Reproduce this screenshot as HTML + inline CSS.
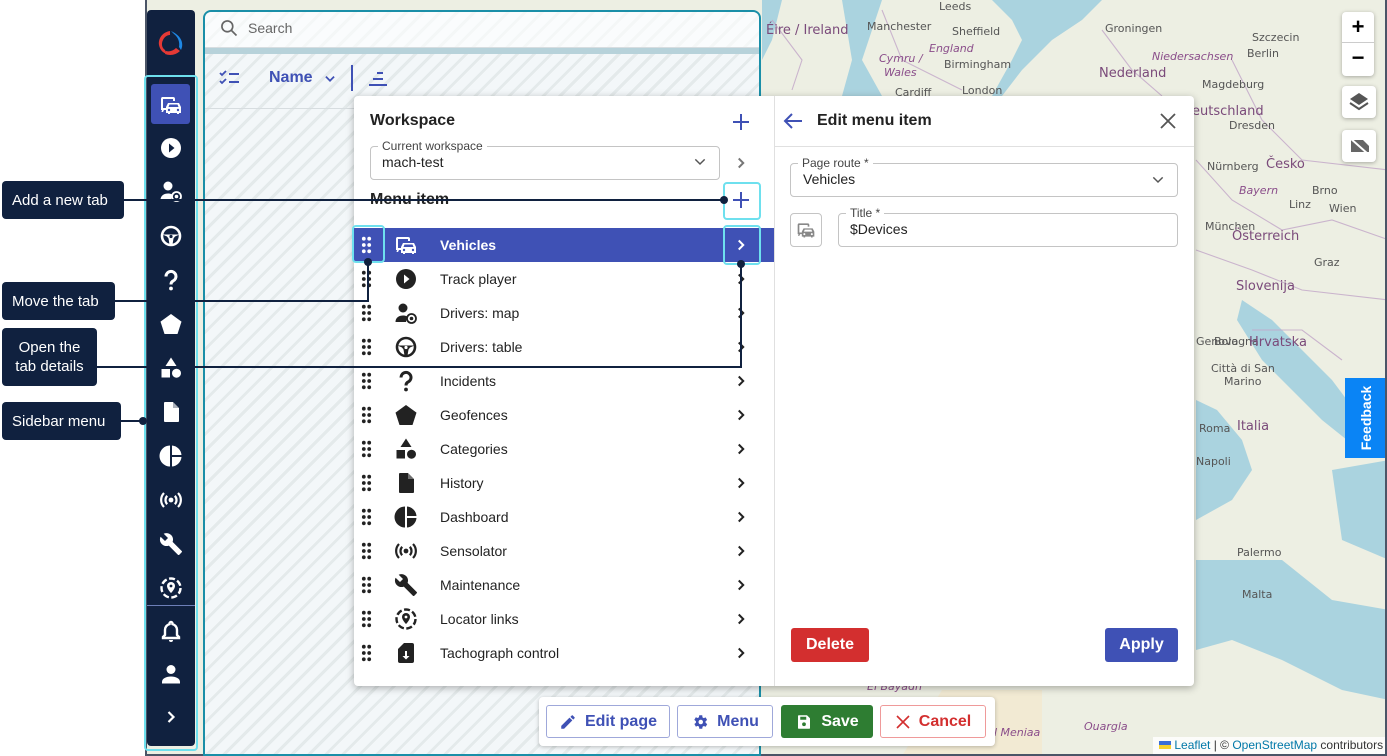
<!DOCTYPE html>
<html><head><meta charset="utf-8">
<style>
*{box-sizing:border-box;margin:0;padding:0}
body{width:1387px;height:756px;overflow:hidden;background:#fff;font-family:"Liberation Sans",sans-serif;position:relative}
.abs{position:absolute}
.frame{left:145px;top:0;width:1242px;height:756px;border:2px solid #4b5567;border-top:none;overflow:hidden;background:#a9d2de}
.map{left:0;top:0}
.sidebar{left:147px;top:10px;width:48px;height:736px;background:#10213f;border-radius:4px}
.panel{left:203px;top:10px;width:558px;height:746px;border:2px solid #1a8fa8;border-radius:8px 8px 0 0;background:repeating-linear-gradient(135deg,#f3f7f9 0 9px,#e4eaeb 9px 12px)}
.callout{background:#10213f;color:#fff;font-size:15px;border-radius:4px;left:2px;padding:0 10px;display:flex;align-items:center;white-space:nowrap}
.line{background:#10213f}
.dot{width:8px;height:8px;border-radius:50%;background:#10213f}
.cy{border:2px solid #6ee0ee;border-radius:4px}
.popup{left:354px;top:96px;width:840px;height:590px;background:#fff;border-radius:4px;box-shadow:0 2px 8px rgba(0,0,0,.3)}
.row{position:absolute;left:0;width:420px;height:34px;font-size:14px;color:#222}
.row .t{position:absolute;left:86px;top:9px}
.row svg{position:absolute}
.btn{position:absolute;top:705px;height:33px;border-radius:3px;font-size:16px;font-weight:bold;display:flex;align-items:center;justify-content:center;gap:8px}
.ctl{background:#fff;border-radius:4px;box-shadow:0 1px 4px rgba(0,0,0,.3)}
.mt{font-family:"DejaVu Sans",sans-serif;font-size:11px;fill:#555}
.mp{font-family:"DejaVu Sans",sans-serif;font-size:11px;fill:#8a4d8a;font-style:italic}
.mc{font-family:"DejaVu Sans",sans-serif;font-size:13px;fill:#7a4a7a}
</style></head><body>
<svg width="0" height="0" style="position:absolute">
<defs>
<symbol id="car" viewBox="0 0 24 24"><path d="M3 4h11a2 2 0 0 1 2 2v2h-2V6H4v9h3v2H5l-1 2H2.5l.5-2H2V6a2 2 0 0 1 1-2z M9 10h11l2 4v6h-2v1h-2v-1h-7v1h-2v-1H7v-6z" fill="currentColor"/><path d="M10.5 11.5h8l1 2.5h-10z" fill="var(--bg)"/><circle cx="10" cy="17" r="1.2" fill="var(--bg)"/><circle cx="19" cy="17" r="1.2" fill="var(--bg)"/></symbol>
<symbol id="play" viewBox="0 0 24 24"><circle cx="12" cy="12" r="10" fill="currentColor"/><path d="M10 7.5l5.5 4.5-5.5 4.5z" fill="var(--bg)"/></symbol>
<symbol id="drv" viewBox="0 0 24 24"><circle cx="9" cy="7" r="4.5" fill="currentColor"/><path d="M1.5 21c0-4.5 3.5-6.5 7.5-6.5 1.5 0 3 .3 4 1l-1 5.5z" fill="currentColor"/><circle cx="17.5" cy="17.5" r="4.5" fill="none" stroke="currentColor" stroke-width="1.8"/><circle cx="17.5" cy="17.5" r="1.8" fill="currentColor"/></symbol>
<symbol id="wheel" viewBox="0 0 24 24"><circle cx="12" cy="12" r="9" fill="none" stroke="currentColor" stroke-width="2.6"/><path d="M3.5 10.5h17l-4.5 2-1.5 2-1 6h-3l-1-6-1.5-2z" fill="currentColor"/><circle cx="12" cy="12.5" r="1.6" fill="var(--bg)"/></symbol>
<symbol id="pent" viewBox="0 0 24 24"><path d="M12 2l10.5 7.6-4 12.4H5.5l-4-12.4z" fill="currentColor"/></symbol>
<symbol id="cat" viewBox="0 0 24 24"><path d="M12 1.5l5.5 8.5H6.5z M2.5 13h8.5v8.5H2.5z" fill="currentColor"/><circle cx="17.5" cy="17.2" r="4.5" fill="currentColor"/></symbol>
<symbol id="file" viewBox="0 0 24 24"><path d="M6 2h8l6 6v13a1 1 0 0 1-1 1H6a1 1 0 0 1-1-1V3a1 1 0 0 1 1-1z" fill="currentColor"/><path d="M14 2v6h6z" fill="var(--bg)" opacity=".35"/></symbol>
<symbol id="pie" viewBox="0 0 24 24"><path d="M11 1.5v21a10.5 10.5 0 0 1 0-21z M13 1.5a10.5 10.5 0 0 1 9.5 9.5H13z M13 13h9.5a10.5 10.5 0 0 1-9.5 9.5z" fill="currentColor"/></symbol>
<symbol id="sens" viewBox="0 0 24 24"><circle cx="12" cy="12" r="2.4" fill="currentColor"/><path d="M8.2 7.8a6 6 0 0 0 0 8.4M15.8 7.8a6 6 0 0 1 0 8.4M5 5a10 10 0 0 0 0 14M19 5a10 10 0 0 1 0 14" fill="none" stroke="currentColor" stroke-width="2.2"/></symbol>
<symbol id="wrench" viewBox="0 0 24 24"><path d="M22.7 19l-9.1-9.1c.9-2.3.4-5-1.5-6.9-2-2-5-2.4-7.4-1.3L9 6 6 9 1.6 4.7C.4 7.1.9 10.1 2.9 12.1c1.9 1.9 4.6 2.4 6.9 1.5l9.1 9.1c.4.4 1 .4 1.4 0l2.3-2.3c.5-.4.5-1.1.1-1.4z" fill="currentColor"/></symbol>
<symbol id="loc" viewBox="0 0 24 24"><circle cx="12" cy="12" r="9.5" fill="none" stroke="currentColor" stroke-width="2.4" stroke-dasharray="6 2.5"/><path d="M12 6a4 4 0 0 1 4 4c0 3-4 7-4 7s-4-4-4-7a4 4 0 0 1 4-4z" fill="currentColor"/><circle cx="12" cy="10" r="1.4" fill="var(--bg)"/></symbol>
<symbol id="tacho" viewBox="0 0 24 24"><path d="M10 2h8a2 2 0 0 1 2 2v16a2 2 0 0 1-2 2H6a2 2 0 0 1-2-2V8z" fill="currentColor"/><path d="M11 10h2v5h2.5L12 18.5 8.5 15H11z" fill="var(--bg)"/></symbol>
<symbol id="q" viewBox="0 0 24 24"><path d="M7 8.5a5 5 0 1 1 7 4.5c-1.4.7-2 1.5-2 3.5" fill="none" stroke="currentColor" stroke-width="3"/><circle cx="12" cy="20.5" r="1.9" fill="currentColor"/></symbol>
<symbol id="dots" viewBox="0 0 12 20"><g fill="currentColor"><circle cx="3" cy="3" r="2.1"/><circle cx="9" cy="3" r="2.1"/><circle cx="3" cy="10" r="2.1"/><circle cx="9" cy="10" r="2.1"/><circle cx="3" cy="17" r="2.1"/><circle cx="9" cy="17" r="2.1"/></g></symbol>
<symbol id="chev" viewBox="0 0 24 24"><path d="M9 6l6 6-6 6" fill="none" stroke="currentColor" stroke-width="2.6"/></symbol>
<symbol id="bell" viewBox="0 0 24 24"><path d="M12 3a1.5 1.5 0 0 1 1.5 1.5v.6A6 6 0 0 1 18 11v5l2 2v1H4v-1l2-2v-5a6 6 0 0 1 4.5-5.9v-.6A1.5 1.5 0 0 1 12 3z" fill="none" stroke="currentColor" stroke-width="2.4"/><path d="M10 21h4a2 2 0 0 1-4 0z" fill="currentColor"/></symbol>
<symbol id="person" viewBox="0 0 24 24"><circle cx="12" cy="7.5" r="4.5" fill="currentColor"/><path d="M3 20c0-3.5 4-5.5 9-5.5s9 2 9 5.5v1.5H3z" fill="currentColor"/></symbol>
</defs></svg>

<div class="abs frame">
<svg class="abs map" width="1242" height="756" viewBox="145 0 1242 756">
<rect x="145" width="1242" height="756" fill="#edefe3"/>
<path d="M760 0 L780 0 L770 40 L760 60 Z" fill="#aad3df"/>
<path d="M840 0 L880 0 L870 30 L860 60 L880 96 L840 96 L850 60 L845 30 Z" fill="#aad3df"/>
<path d="M990 0 L1100 0 L1080 20 L1050 40 L1020 70 L1000 96 L990 96 L1010 60 L1020 40 L1010 20 Z" fill="#aad3df"/>
<path d="M1240 300 L1270 320 L1300 350 L1330 380 L1345 400 L1345 440 L1320 420 L1290 390 L1260 360 L1235 320 Z" fill="#aad3df"/>
<path d="M1194 400 L1215 410 L1240 440 L1250 470 L1230 500 L1194 520 Z" fill="#aad3df"/>
<path d="M1194 560 L1280 560 L1330 600 L1387 610 L1387 700 L1340 690 L1280 660 L1230 640 L1194 650 Z" fill="#aad3df"/>
<path d="M1330 470 L1387 460 L1387 560 L1340 540 Z" fill="#aad3df"/>
<path d="M940 690 L1040 690 L1040 756 L900 756 Z" fill="#f2ead3"/>
<g fill="none" stroke="#c2a6c8" stroke-width="1.1" opacity=".8">
<path d="M1194 160 L1230 200 L1280 230 L1330 220 L1387 240"/>
<path d="M1194 250 L1250 270 L1300 290 L1387 300"/>
<path d="M1230 60 L1260 120 L1300 160 L1387 170"/>
<path d="M1250 330 L1300 330 L1340 360"/>
<path d="M770 20 L800 60 L790 90"/>
<path d="M880 10 L900 60 L960 90"/>
<path d="M1100 30 L1130 70 L1160 96"/>
</g>
<g class="mt">
<text x="937" y="10">Leeds</text><text x="865" y="30">Manchester</text><text x="950" y="35">Sheffield</text><text x="942" y="68">Birmingham</text><text x="893" y="96">Cardiff</text><text x="960" y="94">London</text>
<text x="1103" y="32">Groningen</text><text x="1250" y="41">Szczecin</text><text x="1245" y="57">Berlin</text><text x="1200" y="88">Magdeburg</text><text x="1227" y="129">Dresden</text><text x="1205" y="170">Nürnberg</text><text x="1203" y="230">München</text><text x="1310" y="194">Brno</text><text x="1327" y="212">Wien</text><text x="1287" y="208">Linz</text><text x="1312" y="266">Graz</text>
<text x="1212" y="345">Bologna</text><text x="1209" y="372">Città di San</text><text x="1222" y="385">Marino</text><text x="1197" y="432">Roma</text><text x="1194" y="465">Napoli</text><text x="1235" y="556">Palermo</text><text x="1240" y="598">Malta</text><text x="1194" y="345">Genova</text>
</g>
<g class="mc"><text x="764" y="34">Éire / Ireland</text><text x="1097" y="77">Nederland</text><text x="1180" y="115">Deutschland</text><text x="1230" y="240">Österreich</text><text x="1234" y="290">Slovenija</text><text x="1247" y="346">Hrvatska</text><text x="1235" y="430">Italia</text><text x="1264" y="168">Česko</text></g>
<g class="mp"><text x="927" y="52">England</text><text x="877" y="62">Cymru /</text><text x="882" y="76">Wales</text><text x="1150" y="60">Niedersachsen</text><text x="1237" y="194">Bayern</text><text x="865" y="690">El Bayadh</text><text x="1082" y="730">Ouargla</text><text x="985" y="736">El Meniaa</text></g>
</svg>
<div class="abs ctl" style="left:1195px;top:12px;width:32px;height:64px;font-size:22px;font-weight:bold;text-align:center;line-height:30px"><div style="border-bottom:1px solid #ccc;height:31px">+</div><div>−</div></div>
<div class="abs ctl" style="left:1195px;top:86px;width:34px;height:32px"><svg width="34" height="32" viewBox="0 0 34 32"><path d="M17 7l9 6-9 6-9-6z" fill="#555"/><path d="M8 17l9 6 9-6" fill="none" stroke="#555" stroke-width="2"/></svg></div>
<div class="abs ctl" style="left:1195px;top:130px;width:34px;height:32px"><svg width="34" height="32" viewBox="0 0 34 32"><path d="M9 10h12l6 6v6H9z" fill="#666"/><path d="M8 8l18 16" stroke="#fff" stroke-width="2"/></svg></div>
<div class="abs" style="left:1198px;top:378px;width:42px;height:80px;background:#0a84f5;color:#fff;font-size:14px;font-weight:bold"><div style="position:absolute;left:21px;top:40px;transform:translate(-50%,-50%) rotate(-90deg);white-space:nowrap">Feedback</div></div>
<div class="abs" style="left:1006px;top:737px;width:236px;height:17px;background:rgba(255,255,255,.8);font-size:12px;color:#333;padding:1px 0 0 6px"><span style="display:inline-block;width:12px;height:8px;background:linear-gradient(#3a6fd8 50%,#f7d22d 50%)"></span> <span style="color:#0078a8">Leaflet</span> | © <span style="color:#0078a8">OpenStreetMap</span> contributors</div>
</div>

<div class="abs sidebar" style="color:#fff;--bg:#10213f">
<svg class="abs" style="left:8px;top:18px" width="30" height="30" viewBox="0 0 30 30"><path d="M15 3 C8 4 3 10 4 17 C5 22 8 25 12 26 L10 22 C7 20 6 16 8 12 C10 8 13 7 15 7z" fill="#e53935"/><path d="M16 3 L19 6 C23 9 25 14 24 19 L26 22 C29 16 27 8 16 3z" fill="#1e88e5"/><path d="M10 26 C15 28 21 27 25 23 L21 20 C18 23 14 24 11 23z" fill="#e53935"/></svg>
<div class="abs" style="left:4px;top:74px;width:39px;height:40px;background:#3f51b5;border-radius:3px"></div>
<svg class="abs" style="left:11px;top:83px;--bg:#3f51b5" width="26" height="24"><use href="#car"/></svg>
<svg class="abs" style="left:12px;top:126px" width="24" height="24"><use href="#play"/></svg>
<svg class="abs" style="left:12px;top:169px" width="24" height="24"><use href="#drv"/></svg>
<svg class="abs" style="left:12px;top:214px" width="24" height="24"><use href="#wheel"/></svg>
<svg class="abs" style="left:12px;top:258px" width="24" height="24"><use href="#q"/></svg>
<svg class="abs" style="left:12px;top:302px" width="24" height="24"><use href="#pent"/></svg>
<svg class="abs" style="left:12px;top:346px" width="24" height="24"><use href="#cat"/></svg>
<svg class="abs" style="left:12px;top:390px" width="24" height="24"><use href="#file"/></svg>
<svg class="abs" style="left:12px;top:434px" width="24" height="24"><use href="#pie"/></svg>
<svg class="abs" style="left:12px;top:478px" width="24" height="24"><use href="#sens"/></svg>
<svg class="abs" style="left:12px;top:522px" width="24" height="24"><use href="#wrench"/></svg>
<svg class="abs" style="left:12px;top:566px" width="24" height="24"><use href="#loc"/></svg>
<div class="abs" style="left:0;top:595px;width:48px;height:1px;background:#6d7fb8"></div>
<svg class="abs" style="left:12px;top:609px" width="24" height="24"><use href="#bell"/></svg>
<svg class="abs" style="left:12px;top:652px" width="24" height="24"><use href="#person"/></svg>
<svg class="abs" style="left:14px;top:697px" width="20" height="20"><use href="#chev"/></svg>
</div>

<div class="abs panel">
<div class="abs" style="left:0;top:0;width:554px;height:36px;background:rgba(255,255,255,.6);border-bottom:1px solid #d7dde0;border-radius:6px 6px 0 0"></div>
<svg class="abs" style="left:14px;top:6px" width="20" height="20" viewBox="0 0 24 24"><circle cx="10" cy="10" r="6.5" fill="none" stroke="#666" stroke-width="2"/><path d="M15 15l6 6" stroke="#666" stroke-width="2"/></svg>
<div class="abs" style="left:43px;top:8px;font-size:14px;color:#666">Search</div>
<div class="abs" style="left:0;top:36px;width:554px;height:6px;background:#b7d2da"></div>
<svg class="abs" style="left:14px;top:56px" width="22" height="20" viewBox="0 0 22 20"><path d="M1 5l2 2 4-4M1 13l2 2 4-4" fill="none" stroke="#3f51b5" stroke-width="1.8"/><path d="M10 6h10M10 14h10" stroke="#3f51b5" stroke-width="2"/></svg>
<div class="abs" style="left:64px;top:57px;font-size:16px;font-weight:bold;color:#3f51b5">Name</div>
<svg class="abs" style="left:118px;top:60px" width="14" height="14" viewBox="0 0 24 24"><path d="M5 8l7 7 7-7" fill="none" stroke="#3f51b5" stroke-width="3"/></svg>
<div class="abs" style="left:146px;top:53px;width:2px;height:26px;background:#3f51b5"></div>
<svg class="abs" style="left:162px;top:58px" width="22" height="18" viewBox="0 0 22 18"><path d="M10 3h6M6 9h10M2 15h18" stroke="#3f51b5" stroke-width="2"/></svg>
<div class="abs" style="left:0;top:96px;width:554px;height:1px;background:#d7dde0"></div>
</div>

<div class="abs popup">
<div class="abs" style="left:16px;top:16px;font-size:16px;font-weight:bold;color:#222">Workspace</div>
<svg class="abs" style="left:377px;top:16px" width="20" height="20" viewBox="0 0 20 20"><path d="M10 2v16M2 10h16" stroke="#3f51b5" stroke-width="2"/></svg>
<div class="abs" style="left:16px;top:50px;width:350px;height:34px;border:1px solid #c4c4c4;border-radius:4px"></div>
<div class="abs" style="left:24px;top:43px;font-size:12px;color:#444;background:#fff;padding:0 4px">Current workspace</div>
<div class="abs" style="left:28px;top:58px;font-size:14px;color:#222">mach-test</div>
<svg class="abs" style="left:338px;top:58px" width="16" height="16" viewBox="0 0 24 24"><path d="M5 8l7 7 7-7" fill="none" stroke="#555" stroke-width="2.2"/></svg>
<svg class="abs" style="left:378px;top:58px;color:#777" width="18" height="18"><use href="#chev"/></svg>
<div class="abs" style="left:16px;top:95px;font-size:16px;font-weight:bold;color:#222">Menu item</div>
<svg class="abs" style="left:377px;top:94px" width="20" height="20" viewBox="0 0 20 20"><path d="M10 2v16M2 10h16" stroke="#3f51b5" stroke-width="2"/></svg>
<div class="abs" style="left:420px;top:0;width:1px;height:590px;background:#e0e0e0"></div>

<div class="row" style="top:132px;background:#3f51b5;color:#fff;--bg:#3f51b5;font-weight:bold"><svg style="left:7px;top:8px;color:#fff" width="11" height="18"><use href="#dots"/></svg><svg style="left:39px;top:5px;color:#fff" width="26" height="24"><use href="#car"/></svg><span class="t">Vehicles</span><svg style="left:378px;top:8px;color:#fff" width="18" height="18"><use href="#chev"/></svg></div>
<div class="row" style="top:166px;--bg:#fff;color:#222"><svg style="left:7px;top:8px" width="11" height="18"><use href="#dots"/></svg><svg style="left:40px;top:5px" width="24" height="24"><use href="#play"/></svg><span class="t">Track player</span><svg style="left:378px;top:8px" width="18" height="18"><use href="#chev"/></svg></div>
<div class="row" style="top:200px;--bg:#fff;color:#222"><svg style="left:7px;top:8px" width="11" height="18"><use href="#dots"/></svg><svg style="left:40px;top:5px" width="24" height="24"><use href="#drv"/></svg><span class="t">Drivers: map</span><svg style="left:378px;top:8px" width="18" height="18"><use href="#chev"/></svg></div>
<div class="row" style="top:234px;--bg:#fff;color:#222"><svg style="left:7px;top:8px" width="11" height="18"><use href="#dots"/></svg><svg style="left:40px;top:5px" width="24" height="24"><use href="#wheel"/></svg><span class="t">Drivers: table</span><svg style="left:378px;top:8px" width="18" height="18"><use href="#chev"/></svg></div>
<div class="row" style="top:268px;--bg:#fff;color:#222"><svg style="left:7px;top:8px" width="11" height="18"><use href="#dots"/></svg><svg style="left:40px;top:5px" width="24" height="24"><use href="#q"/></svg><span class="t">Incidents</span><svg style="left:378px;top:8px" width="18" height="18"><use href="#chev"/></svg></div>
<div class="row" style="top:302px;--bg:#fff;color:#222"><svg style="left:7px;top:8px" width="11" height="18"><use href="#dots"/></svg><svg style="left:40px;top:5px" width="24" height="24"><use href="#pent"/></svg><span class="t">Geofences</span><svg style="left:378px;top:8px" width="18" height="18"><use href="#chev"/></svg></div>
<div class="row" style="top:336px;--bg:#fff;color:#222"><svg style="left:7px;top:8px" width="11" height="18"><use href="#dots"/></svg><svg style="left:40px;top:5px" width="24" height="24"><use href="#cat"/></svg><span class="t">Categories</span><svg style="left:378px;top:8px" width="18" height="18"><use href="#chev"/></svg></div>
<div class="row" style="top:370px;--bg:#fff;color:#222"><svg style="left:7px;top:8px" width="11" height="18"><use href="#dots"/></svg><svg style="left:40px;top:5px" width="24" height="24"><use href="#file"/></svg><span class="t">History</span><svg style="left:378px;top:8px" width="18" height="18"><use href="#chev"/></svg></div>
<div class="row" style="top:404px;--bg:#fff;color:#222"><svg style="left:7px;top:8px" width="11" height="18"><use href="#dots"/></svg><svg style="left:40px;top:5px" width="24" height="24"><use href="#pie"/></svg><span class="t">Dashboard</span><svg style="left:378px;top:8px" width="18" height="18"><use href="#chev"/></svg></div>
<div class="row" style="top:438px;--bg:#fff;color:#222"><svg style="left:7px;top:8px" width="11" height="18"><use href="#dots"/></svg><svg style="left:40px;top:5px" width="24" height="24"><use href="#sens"/></svg><span class="t">Sensolator</span><svg style="left:378px;top:8px" width="18" height="18"><use href="#chev"/></svg></div>
<div class="row" style="top:472px;--bg:#fff;color:#222"><svg style="left:7px;top:8px" width="11" height="18"><use href="#dots"/></svg><svg style="left:40px;top:5px" width="24" height="24"><use href="#wrench"/></svg><span class="t">Maintenance</span><svg style="left:378px;top:8px" width="18" height="18"><use href="#chev"/></svg></div>
<div class="row" style="top:506px;--bg:#fff;color:#222"><svg style="left:7px;top:8px" width="11" height="18"><use href="#dots"/></svg><svg style="left:40px;top:5px" width="24" height="24"><use href="#loc"/></svg><span class="t">Locator links</span><svg style="left:378px;top:8px" width="18" height="18"><use href="#chev"/></svg></div>
<div class="row" style="top:540px;--bg:#fff;color:#222"><svg style="left:7px;top:8px" width="11" height="18"><use href="#dots"/></svg><svg style="left:40px;top:5px" width="24" height="24"><use href="#tacho"/></svg><span class="t">Tachograph control</span><svg style="left:378px;top:8px" width="18" height="18"><use href="#chev"/></svg></div>

<svg class="abs" style="left:428px;top:15px" width="22" height="20" viewBox="0 0 22 20"><path d="M20 10H3M10 3l-7 7 7 7" fill="none" stroke="#3f51b5" stroke-width="2"/></svg>
<div class="abs" style="left:463px;top:16px;font-size:16px;font-weight:bold;color:#222">Edit menu item</div>
<svg class="abs" style="left:805px;top:16px" width="18" height="18" viewBox="0 0 18 18"><path d="M2 2l14 14M16 2L2 16" stroke="#555" stroke-width="1.8"/></svg>
<div class="abs" style="left:421px;top:50px;width:419px;height:1px;background:#e0e0e0"></div>
<div class="abs" style="left:436px;top:67px;width:388px;height:34px;border:1px solid #c4c4c4;border-radius:4px"></div>
<div class="abs" style="left:444px;top:60px;font-size:12px;color:#444;background:#fff;padding:0 4px">Page route *</div>
<div class="abs" style="left:449px;top:75px;font-size:14px;color:#222">Vehicles</div>
<svg class="abs" style="left:796px;top:76px" width="16" height="16" viewBox="0 0 24 24"><path d="M5 8l7 7 7-7" fill="none" stroke="#555" stroke-width="2.2"/></svg>
<div class="abs" style="left:436px;top:117px;width:32px;height:34px;border:1px solid #c4c4c4;border-radius:4px"></div>
<svg class="abs" style="left:441px;top:124px;color:#888;--bg:#fff" width="22" height="20"><use href="#car"/></svg>
<div class="abs" style="left:484px;top:117px;width:340px;height:34px;border:1px solid #c4c4c4;border-radius:4px"></div>
<div class="abs" style="left:492px;top:110px;font-size:12px;color:#444;background:#fff;padding:0 4px">Title *</div>
<div class="abs" style="left:496px;top:125px;font-size:14px;color:#222">$Devices</div>
<div class="abs" style="left:437px;top:532px;width:78px;height:34px;background:#d32f2f;border-radius:3px;color:#fff;font-weight:bold;font-size:16px;text-align:center;line-height:34px">Delete</div>
<div class="abs" style="left:751px;top:532px;width:73px;height:34px;background:#3f51b5;border-radius:3px;color:#fff;font-weight:bold;font-size:16px;text-align:center;line-height:34px">Apply</div>
</div>

<div class="abs" style="left:539px;top:697px;width:456px;height:49px;background:#fff;border-radius:4px;box-shadow:0 1px 4px rgba(0,0,0,.25)"></div>
<div class="btn" style="left:546px;width:124px;border:1px solid #9fa8da;color:#3f51b5;background:#fff"><svg width="18" height="18" viewBox="0 0 24 24"><path d="M3 17.2V21h3.8L17.8 9.9 14 6.2zM20.7 7c.4-.4.4-1 0-1.4l-2.3-2.3c-.4-.4-1-.4-1.4 0l-1.8 1.8 3.8 3.7z" fill="#3f51b5"/></svg>Edit page</div>
<div class="btn" style="left:677px;width:96px;border:1px solid #9fa8da;color:#3f51b5;background:#fff"><svg width="18" height="18" viewBox="0 0 24 24"><path d="M19.4 13a7.5 7.5 0 0 0 0-2l2.1-1.6-2-3.5-2.5 1a7 7 0 0 0-1.7-1L15 3h-4l-.4 2.7a7 7 0 0 0-1.7 1l-2.5-1-2 3.5L6.6 11a7.5 7.5 0 0 0 0 2l-2.1 1.6 2 3.5 2.5-1a7 7 0 0 0 1.7 1L11 21h4l.4-2.7a7 7 0 0 0 1.7-1l2.5 1 2-3.5z" fill="#3f51b5"/><circle cx="13" cy="12" r="3" fill="#fff"/></svg>Menu</div>
<div class="btn" style="left:781px;width:92px;background:#2e7d32;color:#fff"><svg width="18" height="18" viewBox="0 0 24 24"><path d="M5 3h11l4 4v13a1 1 0 0 1-1 1H5a1 1 0 0 1-1-1V4a1 1 0 0 1 1-1z" fill="#fff"/><path d="M7 5h8v4H7z" fill="#2e7d32"/><circle cx="12" cy="15" r="2.5" fill="#2e7d32"/></svg>Save</div>
<div class="btn" style="left:880px;width:106px;border:1px solid #ef9a9a;color:#d32f2f;background:#fff"><svg width="16" height="16" viewBox="0 0 16 16"><path d="M2 2l12 12M14 2L2 14" stroke="#d32f2f" stroke-width="1.6"/></svg>Cancel</div>

<div class="abs cy" style="left:144px;top:75px;width:54px;height:676px"></div>
<div class="abs cy" style="left:723px;top:182px;width:38px;height:38px"></div>
<div class="abs cy" style="left:352px;top:225px;width:33px;height:38px"></div>
<div class="abs cy" style="left:723px;top:225px;width:38px;height:40px"></div>

<div class="abs callout" style="top:181px;width:122px;height:38px">Add a new tab</div>
<div class="abs line" style="left:123px;top:199px;width:600px;height:2px"></div>
<div class="abs dot" style="left:720px;top:196px"></div>
<div class="abs callout" style="top:282px;width:113px;height:38px">Move the tab</div>
<div class="abs line" style="left:114px;top:300px;width:255px;height:2px"></div>
<div class="abs line" style="left:367px;top:262px;width:2px;height:40px"></div>
<div class="abs dot" style="left:364px;top:258px"></div>
<div class="abs callout" style="top:328px;width:95px;height:58px;line-height:19px;text-align:center;justify-content:center;white-space:normal">Open the<br>tab details</div>
<div class="abs line" style="left:96px;top:366px;width:646px;height:2px"></div>
<div class="abs line" style="left:740px;top:264px;width:2px;height:104px"></div>
<div class="abs dot" style="left:737px;top:260px"></div>
<div class="abs callout" style="top:402px;width:119px;height:38px">Sidebar menu</div>
<div class="abs line" style="left:120px;top:420px;width:22px;height:2px"></div>
<div class="abs dot" style="left:139px;top:417px"></div>
</body></html>
